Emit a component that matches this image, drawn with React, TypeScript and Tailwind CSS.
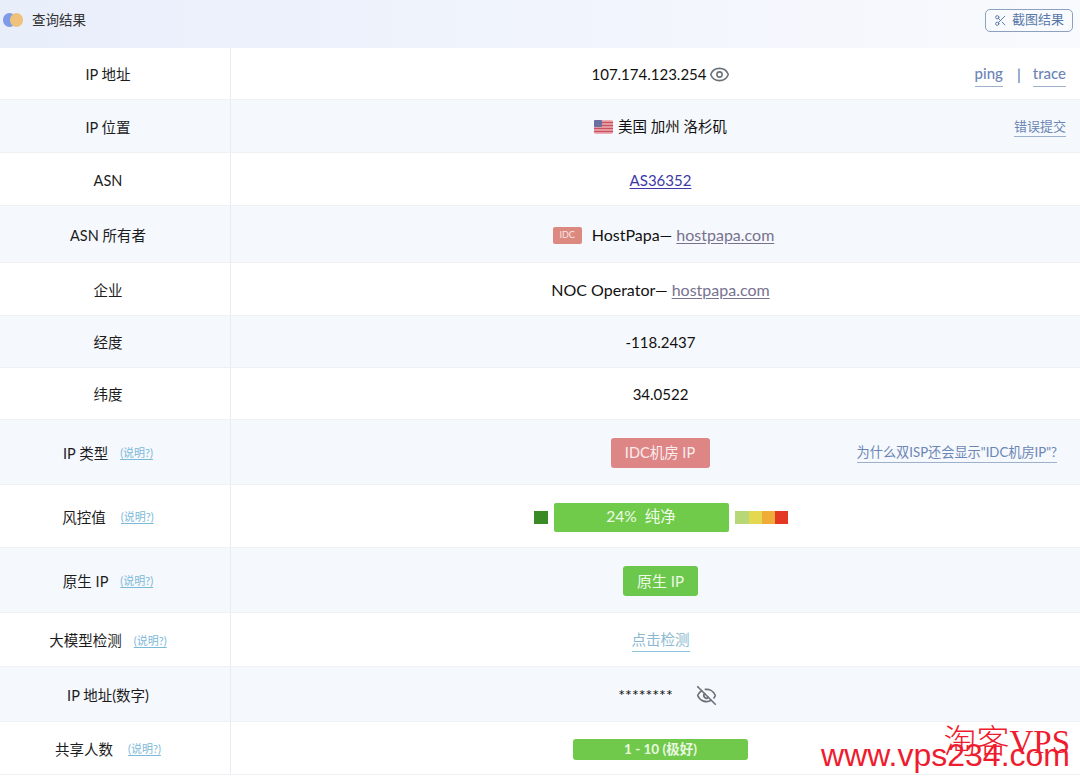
import React from "react";
import { Eye, EyeOff, Scissors } from "lucide-react";

const font = { fontFamily: '"Lato","Noto Sans CJK SC",sans-serif' };

function Hint({ ml = "ml-[12px]" }: { ml?: string }) {
  return <span className={`${ml} text-[11px] text-[#7cb8d8] underline underline-offset-2`}>(说明?)</span>;
}

function Row({ h, alt, label, right, children }: { h: string; alt?: boolean; label: React.ReactNode; right?: React.ReactNode; children: React.ReactNode }) {
  return (
    <div className={`${h} grid grid-cols-[231px_1fr] border-b border-[#eef0f3] ${alt ? "bg-[#f5f8fc]" : "bg-white"}`}>
      <div className="flex items-center justify-center border-r border-[#e8ebef] pr-[14px] pt-[3px] text-[14.5px] text-[#1c1c1c]">{label}</div>
      <div className="grid grid-cols-[1fr_auto_1fr] items-center pl-[10px] pt-[2px] text-[15px] text-[#111]">
        <span />
        <div className="flex items-center justify-center">{children}</div>
        <div className="flex justify-end">{right}</div>
      </div>
    </div>
  );
}

function Flag() {
  return (
    <svg width="19" height="14" viewBox="0 0 19 14" className="mr-[5px]">
      <rect width="19" height="14" rx="2" fill="#eeb0b6" />
      <path d="M0 2.5h19M0 5.5h19M0 8.5h19M0 11.5h19" stroke="#c8505f" strokeWidth="1.4" />
      <rect width="8" height="7" rx="1" fill="#6a6f9f" />
    </svg>
  );
}

export default function App() {
  return (
    <div className="relative h-[776px] w-[1080px] overflow-hidden bg-white" style={font}>
      <div className="flex h-[48px] items-center justify-between bg-gradient-to-r from-[#e9eefb] to-[#f8fafd] pb-[8px] pl-[3px] pr-[7px]">
        <div className="flex items-center">
          <span className="flex h-[14px] w-[20px]">
            <span className="h-[14px] w-[13px] rounded-full bg-[#7f9be8]" />
            <span className="-ml-[6px] h-[14px] w-[13px] rounded-full bg-[#eec27c]" />
          </span>
          <span className="ml-[9px] text-[13.5px] text-[#333]">查询结果</span>
        </div>
        <div className="flex h-[23px] w-[88px] items-center justify-center gap-[5px] rounded-[5px] border border-[#8da0bd] bg-[#f8fafd] text-[13px] text-[#5878a8]">
          <Scissors size={13} strokeWidth={1.8} />
          <span>截图结果</span>
        </div>
      </div>

      <Row h="h-[52px]" label="IP 地址" right={
        <div className="flex items-center pr-[14px] text-[15px] font-medium text-[#6b86b5]">
          <span className="border-b border-[#9db0cc] pb-[2px]">ping</span>
          <span className="ml-[14px] mr-[12px] text-[#5b7bb0]">|</span>
          <span className="border-b border-[#9db0cc] pb-[2px]">trace</span>
        </div>
      }>
        <span>107.174.123.254</span>
        <Eye size={21} strokeWidth={1.8} className="ml-[2px] text-[#6b7178]" />
      </Row>
      <Row h="h-[53px]" alt label="IP 位置" right={
        <span className="mr-[14px] border-b border-[#9db0cc] text-[13px] text-[#6b86b5]">错误提交</span>
      }>
        <Flag />
        <span className="text-[14.5px]">美国 加州 洛杉矶</span>
      </Row>
      <Row h="h-[53px]" label="ASN">
        <span className="text-[#3d3aa8] underline underline-offset-2">AS36352</span>
      </Row>
      <Row h="h-[57px]" alt label="ASN 所有者">
        <span className="ml-[6px] mr-[10px] flex h-[17px] w-[29px] items-center justify-center rounded-[2px] bg-[#dc8a80] text-[9px] text-[#f8e6e2]">IDC</span>
        <span className="text-[16px]">HostPapa—</span>
        <span className="ml-[4px] text-[16px] text-[#77728f] underline underline-offset-2">hostpapa.com</span>
      </Row>
      <Row h="h-[53px]" label="企业">
        <span className="text-[16px]">NOC Operator—</span>
        <span className="ml-[4px] text-[16px] text-[#77728f] underline underline-offset-2">hostpapa.com</span>
      </Row>
      <Row h="h-[52px]" alt label="经度"><span>-118.2437</span></Row>
      <Row h="h-[52px]" label="纬度"><span>34.0522</span></Row>
      <Row h="h-[65px]" alt label={<><span>IP 类型</span><Hint /></>} right={
        <span className="mr-[23px] whitespace-nowrap border-b border-[#9db0cc] text-[13.2px] text-[#6b86b5]">为什么双ISP还会显示"IDC机房IP"?</span>
      }>
        <span className="-ml-[1px] flex h-[30px] w-[99px] items-center justify-center rounded-[3px] bg-[#de8585] text-[14.5px] text-[#fbeeee]">IDC机房 IP</span>
      </Row>
      <Row h="h-[63px]" label={<><span>风控值</span><Hint ml="ml-[15px]" /></>}>
        <span className="h-[13px] w-[14px] bg-[#3a8a26]" />
        <span className="mx-[6px] flex h-[29px] w-[175px] items-center justify-center rounded-[2px] bg-[#70cb4a] text-[15.5px] text-[#f0fae8]">24%&nbsp;&nbsp;纯净</span>
        <span className="h-[13px] w-[14px] bg-[#b8d878]" />
        <span className="h-[13px] w-[13px] bg-[#e4d850]" />
        <span className="h-[13px] w-[13px] bg-[#f0ac38]" />
        <span className="h-[13px] w-[13px] bg-[#e43824]" />
      </Row>
      <Row h="h-[65px]" alt label={<><span>原生 IP</span><Hint /></>}>
        <span className="flex h-[30px] w-[75px] items-center justify-center rounded-[3px] bg-[#6cc84c] text-[15px] text-[#f0fae8]">原生 IP</span>
      </Row>
      <Row h="h-[54px]" label={<><span>大模型检测</span><Hint /></>}>
        <span className="border-b border-[#8cc4e0] text-[14.5px] text-[#8ab8d0]">点击检测</span>
      </Row>
      <Row h="h-[55px]" alt label="IP 地址(数字)">
        <span className="ml-[14px] text-[16px]">********</span>
        <EyeOff size={21} strokeWidth={1.9} className="ml-[23px] text-[#6b7178]" />
      </Row>
      <Row h="h-[53px]" label={<><span>共享人数</span><Hint ml="ml-[15px]" /></>}>
        <span className="flex h-[21px] w-[175px] items-center justify-center rounded-[3px] bg-[#70c94a] text-[13.5px] font-bold text-[#eaf8e2]">1 - 10 (极好)</span>
      </Row>

      <div className="absolute right-[10px] top-[722px] h-[54px] w-[260px] leading-none text-[#ee1c2e]">
        <span className="absolute right-[0px] top-[4px] text-[33px] font-light" style={{ fontFamily: '"Liberation Serif","Noto Sans CJK SC",serif' }}>淘客VPS</span>
        <span className="absolute right-[0px] top-[17px] text-[32px]" style={{ fontFamily: '"Liberation Sans",sans-serif' }}>www.vps234.com</span>
      </div>
    </div>
  );
}
